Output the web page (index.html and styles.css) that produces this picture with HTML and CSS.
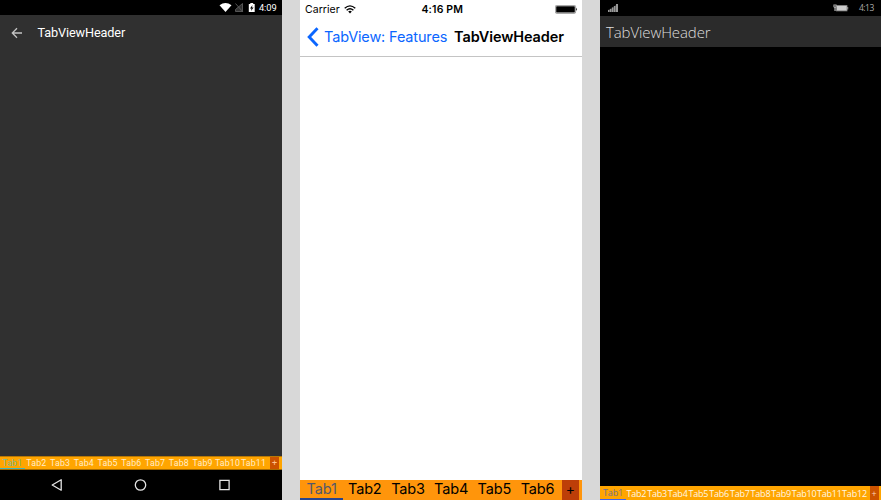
FILE: index.html
```html
<!DOCTYPE html>
<html lang="en">
<head>
<meta charset="utf-8">
<title>TabViewHeader</title>
<link rel="stylesheet" href="styles.css">
</head>
<body>
<main class="phones">
  <section class="phone android">
    <div class="status">
      <svg width="58" height="15" viewBox="0 0 58 15">
        <path d="M19.5 5.2Q25.5 1 31.5 5.2L25.5 12Z" fill="#fff"/>
        <path d="M42.5 3.5V11.5H35.5V9.5ZM35.5 3.5L43 12" fill="#333" stroke="#5c5c5c" stroke-width=".9"/>
        <path d="M48.8 4H50.3V3H53.2V4H54.7V12H48.8Z" fill="#fff"/>
        <path d="M52.5 5L50 8.4H51.5L51 11L53.6 7.5H52Z" fill="#000"/>
      </svg>
      <span class="time">4:09</span>
    </div>
    <header class="bar">
      <svg width="12" height="12" viewBox="0 0 12 12" fill="none" stroke="#c4c4c4" stroke-width="1.3"><path d="M11 6H1.6M6 1.3L1.3 6L6 10.7"/></svg>
      <h1>TabViewHeader</h1>
    </header>
    <div class="content"></div>
    <nav class="tabs">
      <span class="tab active">Tab1</span><span class="tab">Tab2</span><span class="tab">Tab3</span><span class="tab">Tab4</span><span class="tab">Tab5</span><span class="tab">Tab6</span><span class="tab">Tab7</span><span class="tab">Tab8</span><span class="tab">Tab9</span><span class="tab wide">Tab10</span><span class="tab wide">Tab11</span><span class="add">+</span>
    </nav>
    <footer class="keys">
      <svg width="282" height="30" viewBox="0 0 282 30" fill="none" stroke="#e4e4e4" stroke-width="1.3"><path d="M61.2 9.8V20.2L52.2 15Z" stroke-linejoin="round"/><circle cx="140.5" cy="15" r="5.2"/><path d="M219.9 10.4H229.1V19.6H219.9Z"/></svg>
    </footer>
  </section>

  <section class="phone ios">
    <div class="status">
      <span class="carrier">Carrier</span>
      <svg class="wifi" width="12" height="9" viewBox="0 0 12 9" fill="none" stroke="#000" stroke-width="1.35"><path d="M.7 3.2Q6-1.5 11.3 3.2M2.6 5.3Q6 2.1 9.4 5.3"/><path d="M4.2 6.6Q6 5.1 7.8 6.6L6 8.6Z" fill="#000" stroke="none"/></svg>
      <span class="time">4:16 PM</span>
      <svg class="battery" width="23" height="9" viewBox="0 0 23 9"><rect x=".4" y=".4" width="20.2" height="8" rx="1.2" fill="#fff" stroke="#777" stroke-width=".7"/><rect x="1.2" y="1.2" width="18.6" height="6.4" rx=".5"/><path d="M21.2 2.8Q23 4.4 21.2 6Z"/></svg>
    </div>
    <header class="bar">
      <svg width="12" height="20" viewBox="0 0 12 20" fill="none" stroke="#0b66ff" stroke-width="2.9"><path d="M10.5 1.3L2.2 10L10.5 18.7"/></svg>
      <span class="back">TabView: Features</span>
      <h1>TabViewHeader</h1>
    </header>
    <div class="content"></div>
    <nav class="tabs">
      <span class="tab active">Tab1</span><span class="tab">Tab2</span><span class="tab">Tab3</span><span class="tab">Tab4</span><span class="tab">Tab5</span><span class="tab">Tab6</span><span class="add">+</span>
    </nav>
  </section>

  <section class="phone windows">
    <div class="status">
      <svg class="signal" width="10" height="8" viewBox="0 0 10 8" fill="#999"><path d="M0 6H1.5V8H0ZM2 5H3.5V8H2ZM4 3.5H5.5V8H4ZM6 2H7.5V8H6ZM8 0H10V8H8Z"/><path d="M0 6L8 1V8H0Z" opacity=".35"/></svg>
      <svg class="battery" width="16" height="8" viewBox="0 0 16 8"><rect x="3.5" y="1.6" width="10.5" height="5.3" fill="#ccc" stroke="#888" stroke-width=".8"/><path d="M14.3 3H15.2V5.6H14.3Z" fill="#aaa"/><path d="M.4.4H3.6V3L2.7 4V7H1.4V4L.4 3Z" fill="#aaa"/><path d="M1.4 1.4H2.6V2.6H1.4Z"/></svg>
      <span class="time">4:13</span>
    </div>
    <header class="bar"><h1>TabViewHeader</h1></header>
    <div class="content"></div>
    <nav class="tabs">
      <span class="tab active">Tab1</span><span class="tab">Tab2</span><span class="tab">Tab3</span><span class="tab">Tab4</span><span class="tab">Tab5</span><span class="tab">Tab6</span><span class="tab">Tab7</span><span class="tab">Tab8</span><span class="tab">Tab9</span><span class="tab wide">Tab10</span><span class="tab wide">Tab11</span><span class="tab wide">Tab12</span><span class="add">+</span>
    </nav>
  </section>
</main>
</body>
</html>
```
FILE: styles.css
```css
* { box-sizing: border-box; }
body { margin: 0; background: #d8d8d8; }
svg { display: block; flex: none; }
h1 { margin: 0; white-space: nowrap; }
span { white-space: nowrap; }

.phones { display: grid; grid-template-columns: 282px 282px 281px; column-gap: 18px; height: 500px; overflow: hidden; }
.phone { display: flex; flex-direction: column; height: 500px; min-width: 0; }
.status, .bar, .tabs { display: flex; align-items: center; flex: none; }
.content { flex: 1; }
.tabs { align-items: stretch; overflow: hidden; }
.tab, .add { display: flex; align-items: center; justify-content: center; flex: none; }

.android { background: #303030; color: #fff; font-family: Roboto, sans-serif; }
.android .status { height: 15px; background: #000; justify-content: flex-end; padding-right: 6px; }
.android .status svg { margin-right: 1px; }
.android .time { font-size: 9.3px; width: 17px; line-height: 15px; letter-spacing: -.1px; }
.android .bar { height: 35px; padding-left: 11px; }
.android h1 { font-size: 12.7px; font-weight: 400; margin-left: 14.5px; letter-spacing: -.12px; line-height: 18px; }
.android .tabs { height: 14px; background: #ffa500; border-top: 1px solid #b87805; border-bottom: 1px solid #a86b00; }
.android .tab { width: 23.75px; font-size: 8.8px; letter-spacing: .15px; color: #ffecc8; }
.android .wide { width: 26px; }
.android .active { width: 24.5px; color: #80b890; border-bottom: 1px solid #45b8b8; }
.android .add { width: 9px; margin-left: 3.5px; background: #cc5200; color: #ffc18c; font-size: 9px; }
.android .keys { height: 30px; background: #000; }

.ios { background: #fff; color: #000; font-family: Inter, sans-serif; }
.ios .status { height: 18px; padding-left: 5px; font-size: 10.5px; }
.ios .carrier { width: 39px; letter-spacing: .05px; }
.ios .time { width: 43px; margin-left: 65.5px; font-weight: 600; letter-spacing: .12px; }
.ios .battery { margin-left: 90.5px; }
.ios .bar { height: 39px; padding-left: 7px; border-bottom: 1px solid #c4c4c4; }
.ios .back { width: 124px; margin-left: 5px; color: #0b66ff; font-size: 14.5px; letter-spacing: -.15px; padding-bottom: 2px; }
.ios h1 { margin-left: 6px; font-size: 14.5px; font-weight: 600; letter-spacing: -.1px; padding-bottom: 2px; }
.ios .tabs { height: 20px; background: #ff950b; }
.ios .tab { width: 43.2px; font-size: 14.5px; letter-spacing: -.15px; line-height: 18px; align-items: flex-start; }
.ios .active { color: #54596b; border-bottom: 2px solid #2a458c; }
.ios .add { width: 17px; margin-left: 2.8px; padding-bottom: 3px; background: #bd3e08; font-size: 14px; }

.windows { background: #000; color: #ddd; font-family: "Open Sans", sans-serif; }
.windows .status { height: 15px; padding-left: 8px; }
.windows .battery { margin-left: 215px; }
.windows .time { margin-left: 10px; font-size: 8.5px; letter-spacing: -.5px; color: #aaa; }
.windows .bar { height: 31px; margin-top: 1px; padding-left: 6px; background: #2b2b2b; }
.windows h1 { font-size: 15px; font-weight: 300; letter-spacing: -.1px; line-height: 22px; }
.windows .tabs { height: 14px; background: #ffa500; }
.windows .tab { width: 20.7px; font-size: 9px; letter-spacing: -.2px; color: #fff7e4; }
.windows .wide { width: 25.2px; }
.windows .active { width: 26px; color: #75718a; border-bottom: 1px solid #3f62e8; }
.windows .add { width: 9px; margin-left: 2.5px; background: #cc5200; color: #ffd5b5; font-size: 9px; }
```
